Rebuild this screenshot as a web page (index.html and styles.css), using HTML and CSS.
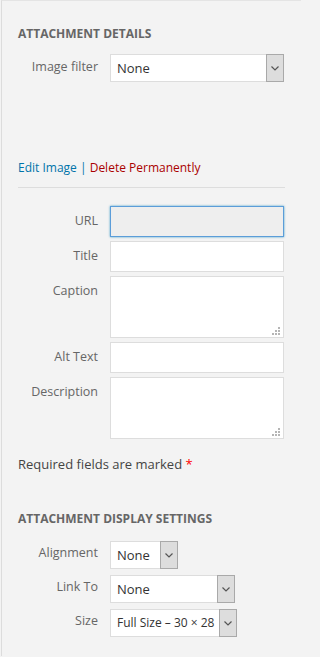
FILE: index.html
```html
<!DOCTYPE html>
<html>
<head>
<meta charset="utf-8">
<link rel="stylesheet" href="styles.css">
</head>
<body>
<div class="panel">
  <h2 class="heading first">Attachment Details</h2>
  <div class="row row-select">
    <span class="label">Image filter</span>
    <div class="select wide">
      <span class="select-text">None</span>
      <span class="arrow"><svg width="8" height="5" viewBox="0 0 8 5"><path d="M0.5 0.5 L4 4 L7.5 0.5" fill="none" stroke="#555" stroke-width="1.2"/></svg></span>
    </div>
  </div>

  <div class="actions">
    <a class="edit" href="#">Edit Image</a> <span class="sep">|</span> <a class="delete" href="#">Delete Permanently</a>
  </div>
  <div class="rule"></div>

  <div class="fields">
    <div class="row">
      <span class="label">URL</span>
      <div class="input focus"></div>
    </div>
    <div class="row">
      <span class="label">Title</span>
      <div class="input"></div>
    </div>
    <div class="row">
      <span class="label">Caption</span>
      <div class="input textarea"><span class="grip"></span></div>
    </div>
    <div class="row">
      <span class="label">Alt Text</span>
      <div class="input"></div>
    </div>
    <div class="row">
      <span class="label">Description</span>
      <div class="input textarea"><span class="grip"></span></div>
    </div>
  </div>

  <p class="required">Required fields are marked <span class="star">*</span></p>

  <h2 class="heading second">Attachment Display Settings</h2>
  <div class="settings">
    <div class="row row-small">
      <span class="label">Alignment</span>
      <div class="select w-align">
        <span class="select-text">None</span>
        <span class="arrow"><svg width="8" height="5" viewBox="0 0 8 5"><path d="M0.5 0.5 L4 4 L7.5 0.5" fill="none" stroke="#555" stroke-width="1.2"/></svg></span>
      </div>
    </div>
    <div class="row row-small">
      <span class="label">Link To</span>
      <div class="select w-link">
        <span class="select-text">None</span>
        <span class="arrow"><svg width="8" height="5" viewBox="0 0 8 5"><path d="M0.5 0.5 L4 4 L7.5 0.5" fill="none" stroke="#555" stroke-width="1.2"/></svg></span>
      </div>
    </div>
    <div class="row row-small">
      <span class="label">Size</span>
      <div class="select w-size">
        <span class="select-text">Full Size – 30 × 28</span>
        <span class="arrow"><svg width="8" height="5" viewBox="0 0 8 5"><path d="M0.5 0.5 L4 4 L7.5 0.5" fill="none" stroke="#555" stroke-width="1.2"/></svg></span>
      </div>
    </div>
  </div>
</div>
</body>
</html>
```

FILE: styles.css
```css
html, body {
  margin: 0;
  padding: 0;
  background: #f3f3f3;
}
body {
  font-family: "Open Sans", "Noto Sans", sans-serif;
  color: #444;
  padding-left: 1px;
}
.panel {
  width: 300px;
  min-height: 656px;
  border-left: 1px solid #dcdcdc;
  border-top: 1px solid #e4e4e4;
  padding: 0 16px 0 16px;
  box-sizing: border-box;
}
.heading {
  margin: 0;
  font-size: 12px;
  line-height: 16px;
  font-weight: 700;
  text-transform: uppercase;
  color: #666;
}
.heading.first { margin-top: 25px; }
.heading.second { margin-top: 37px; }

.row {
  display: flex;
  align-items: flex-start;
  gap: 12px;
}
.label {
  width: 80px;
  flex: none;
  text-align: right;
  font-size: 12.5px;
  line-height: 30px;
  color: #666;
}
.row-select { margin-top: 12px; }
.row-select .label { line-height: 26px; }

.select {
  display: flex;
  align-items: stretch;
  height: 28px;
  box-sizing: border-box;
  border: 1px solid #dddddd;
  background: #fff;
}
.select.wide { flex: 1; margin-right: 1px; }
.select-text {
  flex: 1;
  padding-left: 6px;
  font-size: 13px;
  line-height: 26px;
  color: #333;
  white-space: nowrap;
  overflow: hidden;
}
.arrow {
  flex: none;
  width: 16px;
  margin: -1px -1px -1px 0;
  border: 1px solid #a9a9a9;
  background: #dddddd;
  display: flex;
  align-items: center;
  justify-content: center;
}

.actions {
  margin-top: 76px;
  font-size: 12px;
  line-height: 20px;
}
.actions a { text-decoration: none; }
.edit { color: #0073aa; }
.sep { color: #0073aa; }
.delete { color: #a00; }
.rule {
  margin-top: 9px;
  height: 1px;
  background: #dddddd;
}

.fields {
  margin-top: 18px;
  display: flex;
  flex-direction: column;
  gap: 4px;
}
.input {
  flex: 1;
  margin-right: 1px;
  height: 31px;
  box-sizing: border-box;
  border: 1px solid #dddddd;
  background: #fff;
  position: relative;
}
.input.focus {
  background: #eeeeee;
  border-color: #5b9dd9;
  box-shadow: 0 0 2px rgba(30, 140, 190, 0.8);
}
.input.textarea { height: 62px; }
.grip {
  position: absolute;
  right: 3px;
  bottom: 2px;
  width: 8px;
  height: 8px;
  background-image:
    linear-gradient(#b5b5b5, #b5b5b5),
    linear-gradient(#b5b5b5, #b5b5b5),
    linear-gradient(#b5b5b5, #b5b5b5),
    linear-gradient(#b5b5b5, #b5b5b5),
    linear-gradient(#b5b5b5, #b5b5b5),
    linear-gradient(#b5b5b5, #b5b5b5);
  background-size: 2px 2px;
  background-repeat: no-repeat;
  background-position:
    6px 0,
    3px 3px, 6px 3px,
    0 6px, 3px 6px, 6px 6px;
}

.required {
  margin: 15px 0 0 0;
  font-size: 13px;
  line-height: 20px;
  color: #444;
}
.star { color: #f00; }

.settings {
  margin-top: 14px;
  display: flex;
  flex-direction: column;
  gap: 6px;
}
.row-small .label { line-height: 24px; }
.w-align { width: 68px; }
.w-link { width: 125px; }
.w-size { width: 127px; }
.w-size .select-text { padding-left: 6px; font-size: 12px; }
```
